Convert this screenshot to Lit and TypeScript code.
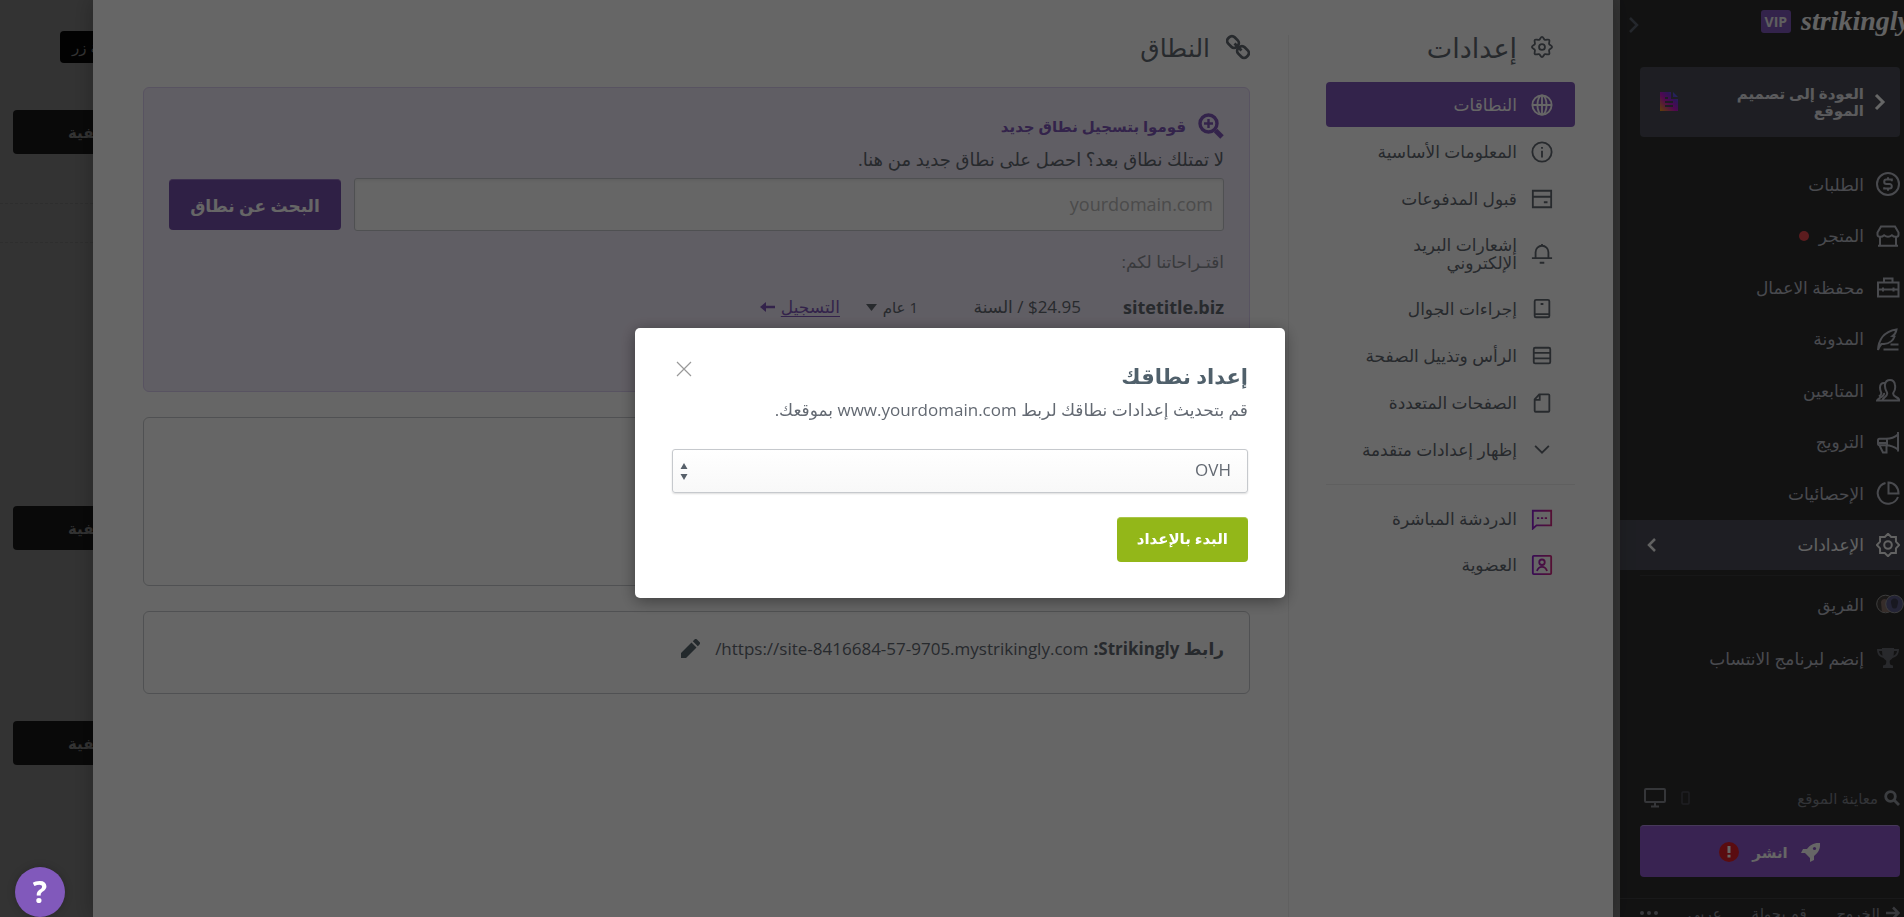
import { LitElement, html, svg, css, nothing } from "lit";
import { customElement, state } from "lit/decorators.js";

const icons: Record<string, unknown> = {
  dollar: svg`<circle cx="12" cy="12" r="11"/><path d="M15.8 9.2V7.6H10.4a2.2 2.2 0 0 0 0 4.4h3.2a2.2 2.2 0 0 1 0 4.4H8.2v-1.2M12 5.3v2.3M12 16.4v2.3"/>`,
  store: svg`<path d="M5 2.5h14l3.5 6v2.4c0 1.2-1.4 1.9-3.2 1.9-1.3 0-2.5-.8-3.4-1.6-1.1.9-2.300 1.600-3.900 1.600s-2.800-.7-3.900-1.600c-.9.8-2.100 1.600-3.400 1.600-1.800 0-3.200-.7-3.200-1.900V8.500zM4 12.500v9.300M20 12.500v9.300M2 21.800h20"/>`,
  briefcase: svg`<path d="M2 7.500h20.500v14H2zM8 7.500v-4h8.500v4M2 14.500h20.500M7 12.500v4M17.500 12.500v4"/>`,
  quill: svg`<path d="M2 23c.5-9 5-18.500 18.500-20.500-.5 3-1.500 5-4 6.500l2 .5c-1.500 4.500-5 7-10.500 7.500L5.500 17C4 18.500 3 20 2 23zM14.500 17.500h8M7.500 22.500h15"/>`,
  people: svg`<path d="M8 15c.5 2-1 3-3.500 4.500C2 21 1 21.500 1 22.500h22.500c0-1.500-1.500-2.500-3.500-3.500-2.500-1.300-3.500-2.500-2.500-4.500 1.500-2 2-4.500 1.500-7.500C18.500 3.500 17 2 14 2S9.500 3.500 9 6.500c-.5 3.500.5 5.500 2 8 .8 2-.5 3.500-2.500 5-1 .8-2 1.500-2 3M9 5C5.500 4.500 4 6.500 4 9.500c0 2 .3 3 1 4.500.8 1.500 0 3-2 4.500"/>`,
  megaphone: svg`<path d="M22 2v19.500M22 4.500c-4 3.500-8 4.300-12 4.300H3.500C2.500 8.800 2 9.500 2 10.500v3c0 1 .5 1.700 1.500 1.700H10c4 0 8 1.300 12 4.300M11 9v6.200M2 13h9M3.500 15.500 7 22.500h3.500v-7"/>`,
  pie: svg`<path d="M9.500 2A10.500 10.500 0 1 0 22 16M12.500 1.500v11h10c0-6-4-11-10-11z"/>`,
  gear: svg`<path d="M12 .8 15.200 3.900 19.900 3.900 20 8.700 23.200 12 20 15.300 19.900 20.100 15.200 20.100 12 23.200 8.800 20.100 4.100 20.100 4 15.300 .8 12 4 8.700 4.100 3.900 8.800 3.900z"/><circle cx="12" cy="12" r="3.800"/>`,
  cog: svg`<path d="M12 1c1.600 0 1.900 2.700 3.200 3.200 1.300.6 3.500-1.100 4.600 0s-.6 3.300 0 4.600C20.300 10.100 23 10.400 23 12s-2.700 1.900-3.200 3.200c-.6 1.300 1.100 3.500 0 4.600s-3.300-.6-4.600 0c-1.300.5-1.600 3.200-3.200 3.200s-1.900-2.700-3.200-3.200c-1.300-.6-3.500 1.100-4.600 0s.6-3.300 0-4.600C3.700 13.900 1 13.600 1 12s2.700-1.900 3.200-3.200c.6-1.300-1.100-3.500 0-4.600s3.300.6 4.600 0C10.100 3.700 10.400 1 12 1z"/><circle cx="12" cy="12" r="3.200"/>`,
  globe: svg`<circle cx="12" cy="12" r="10.500"/><ellipse cx="12" cy="12" rx="5" ry="10.500"/><path d="M12 1.500v21M1.500 12h21"/>`,
  info: svg`<circle cx="12" cy="12" r="10.500"/><path d="M12 10.500V18M12 6.500v2"/>`,
  card: svg`<path d="M2 3h20v18H2zM2 9.500h20M14 15.500h4"/>`,
  bell: svg`<path d="M5 16v-6a7 7 0 0 1 14 0v6M1 16.500h22M12 1v2M9.500 21.500h5"/>`,
  phone: svg`<rect x="4" y="2" width="16" height="19" rx="1.500"/><path d="M4 17.500h16M10.500 6.500h3"/>`,
  rows: svg`<rect x="3" y="3" width="18" height="17" rx="1.500"/><path d="M3 8.500h18M3 14.500h18"/>`,
  page: svg`<path d="M9 2.500h10a1 1 0 0 1 1 1v17a1 1 0 0 1-1 1H5a1 1 0 0 1-1-1V8zM9.500 2.500V8.500H4"/>`,
  down: svg`<path d="M4.500 7.500 12 15l7.500-7.500"/>`,
  chat: svg`<path d="M2 3h20v16H6l-4 3.500zM6.500 11h2.500M10.800 11h2.500M15 11h2.500" stroke="url(#hot)"/>`,
  member: svg`<g stroke="url(#hot)"><rect x="2" y="2" width="20" height="20" rx="1"/><circle cx="12" cy="9" r="3"/><path d="M6.500 18.500c1-3 3-4.500 5.500-4.500s4.500 1.500 5.500 4.500"/></g>`,
};

const hot = svg`<defs><linearGradient id="hot" x1="0" y1="0" x2="24" y2="0" gradientUnits="userSpaceOnUse"><stop offset="0" stop-color="#8a20d8"/><stop offset="1" stop-color="#d8287c"/></linearGradient></defs>`;

const icon = (name: string, size = 24) => html`<svg class="icon" width=${size} height=${size} viewBox="0 0 24 24" fill="none" stroke="currentColor" stroke-width="2" aria-hidden="true">${hot}${icons[name]}</svg>`;

const mainNav = [
  { icon: "dollar", label: "الطلبات" },
  { icon: "store", label: "المتجر", dot: true },
  { icon: "briefcase", label: "محفظة الاعمال" },
  { icon: "quill", label: "المدونة" },
  { icon: "people", label: "المتابعين" },
  { icon: "megaphone", label: "الترويج" },
  { icon: "pie", label: "الإحصائيات" },
  { icon: "gear", label: "الإعدادات", active: true },
];

const settingsNav = [
  { icon: "globe", label: "النطاقات", active: true },
  { icon: "info", label: "المعلومات الأساسية" },
  { icon: "card", label: "قبول المدفوعات" },
  { icon: "bell", label: "إشعارات البريد الإلكتروني", tall: true },
  { icon: "phone", label: "إجراءات الجوال" },
  { icon: "rows", label: "الرأس وتذييل الصفحة" },
  { icon: "page", label: "الصفحات المتعددة" },
  { icon: "down", label: "إظهار إعدادات متقدمة" },
];

const extraNav = [
  { icon: "chat", label: "الدردشة المباشرة" },
  { icon: "member", label: "العضوية" },
];

const base = css`
  * { box-sizing: border-box; margin: 0; }
  a { color: inherit; text-decoration: none; }
  button, input, select { font: inherit; color: inherit; border: 0; }
  svg { flex: none; display: block; }
`;

@customElement("side-bar")
export class SideBar extends LitElement {
  static styles = [base, css`
    :host { display: flex; flex-direction: column; flex: none; width: 300px; height: calc(100vh + 9px); background: #2e2e2f; color: #b6b9c3; font-size: 17px; }
    .brand { display: flex; align-items: center; height: 42px; padding: 0 10px 0 8px; gap: 10px; }
    .logo { font: italic bold 28px/36px "Liberation Serif", serif; color: #f4f4f4; direction: ltr; }
    .vip { background: #8159bb; color: #eee; font: bold 14px/23px "Open Sans", sans-serif; padding: 0 4px; border-radius: 3px; }
    .collapse { margin-right: auto; background: none; color: #5c6370; padding: 0; margin-top: 8px; }
    .back { display: flex; align-items: center; height: 70px; margin: 25px 20px 0; padding: 0 14px 0 20px; border-radius: 4px; background: #4b4d57; color: #e4e4e8; font-size: 15px; line-height: 17px; font-weight: 600; }
    .back span { width: 136px; margin: 0 9px 0 auto; }
    .nav { display: flex; flex-direction: column; justify-content: space-between; height: 411px; margin-top: 22px; }
    .row { display: flex; align-items: center; gap: 12px; height: 50px; padding: 0 20px 0 26px; }
    .row .dot { width: 10px; height: 10px; margin-right: -2px; border-radius: 50%; background: #e5484d; }
    .active { background: #4b4d57; color: #f4f4f4; }
    .active .end { margin-right: auto; }
    .rule { border-top: 1px solid #3a3a3c; margin: 5px 20px 3px; }
    .team { padding-right: 16px; }
    .plain { margin-top: 4px; }
    .bottom { margin-top: auto; }
    .preview { display: flex; align-items: center; gap: 6px; padding: 0 20px 0 24px; font-size: 15px; color: #7f828b; height: 34px; }
    .preview .devices { display: flex; align-items: center; gap: 15px; margin-right: auto; }
    .publish { display: flex; align-items: center; justify-content: center; gap: 13px; width: 260px; height: 52px; margin: 10px 20px 21px; padding: 0; border-radius: 4px; background: #8e58cd; border-top: 1px solid #b28fe0; color: #fff; font-size: 15px; font-weight: 700; }
    .footer { display: flex; justify-content: space-between; align-items: center; height: 28px; padding: 0 20px; border-top: 1px solid #3f3f42; color: #8d9099; font-size: 15px; }
    .footer a { display: flex; align-items: center; gap: 6px; }
  `];

  render() {
    return html`
      <div class="brand">
        <span class="logo">strikingly</span><span class="vip">VIP</span>
        <button class="collapse" aria-label="طي"><svg width="12" height="16" viewBox="0 0 12 16" fill="none" stroke="currentColor" stroke-width="2.500"><path d="m2 1 7 7-7 7"/></svg></button>
      </div>
      <a class="back" href="#">
        <svg width="13" height="18" viewBox="0 0 13 18" fill="none" stroke="#fff" stroke-width="3"><path d="m3 2 7 7-7 7"/></svg>
        <span>العودة إلى تصميم الموقع</span>
        <svg width="18" height="20" viewBox="0 0 18 20"><defs><linearGradient id="doc" x1="0" y1="1" x2="1" y2="0"><stop offset="0" stop-color="#f0a010"/><stop offset=".45" stop-color="#c814c8"/><stop offset=".7" stop-color="#7a30d8"/><stop offset="1" stop-color="#3888f0"/></linearGradient></defs><path fill="url(#doc)" d="M0 0h11v7h7v12H0zM13 0l5 5h-5z"/><path stroke="#4b4d57" stroke-width="2" d="M5 6h3M5 10h8M5 14h8"/></svg>
      </a>
      <nav class="nav">
        ${mainNav.map((n) => html`<a href="#" class="row ${n.active ? "active" : ""}">${icon(n.icon)}<span>${n.label}</span>${n.dot ? html`<i class="dot"></i>` : nothing}${n.active ? html`<svg class="end" width="12" height="14" viewBox="0 0 12 14" fill="none" stroke="currentColor" stroke-width="2.500"><path d="M9 1 3 7l6 6"/></svg>` : nothing}</a>`)}
      </nav>
      <div class="rule"></div>
      <a href="#" class="row team"><svg width="28" height="20" viewBox="0 0 28 20"><circle cx="9.500" cy="10" r="8.800" fill="#45403c" stroke="#999" stroke-width="1"/><path fill="#88706a" d="M5 8c1-4 6-4 7 0v5l3 5H6z"/><circle cx="18.500" cy="10" r="8.800" fill="#5a5a88" stroke="#999" stroke-width="1"/><path fill="#3c3c50" d="M15 9c-1-6 8-6 7 0l-1 4c-1 2-4 2-5 0z"/></svg><span>الفريق</span></a>
      <a href="#" class="row plain"><svg width="24" height="24" viewBox="0 0 24 24" fill="#65676e"><path d="M6 2h12v1h5c0 6-3 8-6.500 9-1 1.500-2.500 2-2.800 3 0 3 .3 4 3.300 4.500v2.500H7v-2.500c3-.5 3.300-1.500 3.300-4.500-.3-1-1.800-1.500-2.800-3C4 11 1 9 1 3h5zM3 5c.3 2.500 1.500 4 3.500 4.800L6 5zm18 0h-3l-.5 4.800C19.500 9 20.700 7.500 21 5z"/></svg><span>إنضم لبرنامج الانتساب</span></a>
      <div class="bottom">
        <div class="preview">
          <svg width="16" height="16" viewBox="0 0 16 16" fill="none" stroke="#9598a1" stroke-width="2.800"><circle cx="6.500" cy="6.500" r="4.800"/><path d="m10 10 5 5"/></svg>
          <span>معاينة الموقع</span>
          <span class="devices">
            <svg width="9" height="14" viewBox="0 0 9 14" fill="none" stroke="#4c4e55" stroke-width="1.500"><rect x="1" y="1" width="7" height="12" rx="1"/></svg>
            <svg width="22" height="20" viewBox="0 0 22 20" fill="none" stroke="#85878e" stroke-width="2"><rect x="1" y="1" width="20" height="13" rx="1"/><path d="M11 14v4M7 18.500h8"/></svg>
          </span>
        </div>
        <button class="publish">
          <svg width="20" height="20" viewBox="0 0 20 20" fill="#fff"><path d="M19 1c-6-.6-10 2-13 6H2L0 11h4l5 5v4l4-2v-4c4-3 6.500-7 6-13z"/><circle cx="13.500" cy="6.500" r="1.600" fill="#8e58cd"/></svg>
          <span>انشر</span>
          <svg width="20" height="20" viewBox="0 0 20 20"><circle cx="10" cy="10" r="10" fill="#e02028"/><path stroke="#fff" stroke-width="3" d="M10 4v7M10 12.800v2.700"/></svg>
        </button>
        <div class="footer">
          <a href="#"><svg width="14" height="14" viewBox="0 0 14 14" fill="none" stroke="currentColor" stroke-width="2.500"><path d="M0 7h12M7 1.500 12.500 7 7 12.500"/></svg>الخروج</a>
          <a href="#">قم بجولة</a><a href="#">عربي</a>
          <a href="#" aria-label="المزيد"><svg width="18" height="4" viewBox="0 0 18 4" fill="currentColor"><circle cx="2" cy="2" r="2"/><circle cx="9" cy="2" r="2"/><circle cx="16" cy="2" r="2"/></svg></a>
        </div>
      </div>`;
  }
}

@customElement("settings-menu")
export class SettingsMenu extends LitElement {
  static styles = [base, css`
    :host { display: block; flex: none; width: 325px; padding: 27px 38px 0; color: #636972; background: linear-gradient(#f0f0f0, #f0f0f0) left 35px / 1px 100% no-repeat; }
    h1 { display: flex; align-items: center; gap: 14px; height: 40px; padding-right: 22px; margin-bottom: 15px; font-size: 27px; font-weight: 500; }
    nav { display: flex; flex-direction: column; gap: 2px; font-size: 17px; line-height: 18px; }
    a { display: flex; align-items: center; gap: 14px; min-height: 45px; padding: 0 22px 0 0; border-radius: 4px; }
    a span { max-width: 190px; }
    .tall { min-height: 61px; }
    .tall span { width: 130px; }
    .active { background: #8159bb; color: #fff; }
    .extra { margin-top: 12px; padding-top: 11px; border-top: 1px solid #eee; gap: 1px; }
  `];

  render() {
    const item = (n: any) => html`<a href="#" class="${n.active ? "active" : ""} ${n.tall ? "tall" : ""}">${icon(n.icon, 22)}<span>${n.label}</span></a>`;
    return html`<h1>${icon("cog", 22)}<span>إعدادات</span></h1>
      <nav>${settingsNav.map(item)}</nav>
      <nav class="extra">${extraNav.map(item)}</nav>`;
  }
}

@customElement("domain-panel")
export class DomainPanel extends LitElement {
  static styles = [base, css`
    :host { display: flex; flex-direction: column; flex: 1; min-width: 0; padding: 27px 38px 0 50px; color: #636972; font-size: 18px; }
    h2 { display: flex; align-items: center; gap: 16px; height: 40px; margin-bottom: 20px; font-size: 25px; font-weight: 500; }
    .box { border: 1px solid #c9cbcf; border-radius: 6px; padding: 25px; }
    .find { background: #f1eaf9; border-color: #dccff2; height: 305px; margin-bottom: 25px; }
    .empty { height: 169px; margin-bottom: 25px; }
    .address { display: flex; align-items: center; gap: 5px; height: 83px; padding: 0 25px 8px; font-size: 17px; }
    .address b { font-weight: 700; }
    .address button { background: none; padding: 0; margin-right: 10px; }
    h3 { display: flex; align-items: center; gap: 12px; height: 26px; font-size: 15px; font-weight: 600; color: #8159bb; }
    .hint { line-height: 26px; margin: 7px 0 6px; }
    form { display: flex; gap: 13px; align-items: center; }
    input { flex: 1; min-width: 0; height: 53px; padding: 0 10px 2px; direction: ltr; text-align: right; border: 1px solid #c6c9cd; border-radius: 3px; background: #fff; box-shadow: inset 0 2px 3px #0001; }
    input::placeholder { color: #bbb; opacity: 1; }
    .search { width: 172px; height: 51px; padding: 0; border-radius: 4px; background: #7750ac; border-top: 1px solid #9c7bc8; color: #fff; font-size: 17px; font-weight: 600; }
    .hint2 { line-height: 26px; margin-top: 18px; color: #8c9097; font-size: 17px; }
    .offer { display: flex; align-items: center; height: 30px; margin-top: 17px; line-height: 26px; font-size: 17px; }
    .offer b { width: 143px; font-size: 18px; }
    .offer .price { width: 163px; }
    .offer .term { width: 78px; font-size: 15px; display: flex; align-items: center; gap: 6px; }
    .offer a { display: flex; align-items: center; gap: 6px; color: #8159bb; }
    .offer u { text-underline-offset: 3px; }
  `];

  render() {
    return html`
      <h2><svg width="24" height="26" viewBox="0 0 24 26" fill="none" stroke="currentColor" stroke-width="2.800"><rect x="-6" y="-4.500" width="12" height="9" rx="3.800" transform="translate(7 8) rotate(45)"/><rect x="-6" y="-4.500" width="12" height="9" rx="3.800" transform="translate(17 18) rotate(45)"/><path d="m8.500 9.500 7 7"/></svg><span>النطاق</span></h2>
      <section class="box find">
        <h3><svg width="26" height="26" viewBox="0 0 26 26" fill="none" stroke="currentColor"><circle cx="10.500" cy="10.500" r="8.500" stroke-width="3.400"/><path stroke-width="5" d="m17.500 17.500 6.500 6.500"/><path stroke-width="2.400" d="M10.500 6v9M6 10.500h9"/></svg><span>قوموا بتسجيل نطاق جديد</span></h3>
        <p class="hint"><label for="domain">لا تمتلك نطاق بعد؟ احصل على نطاق جديد من هنا.</label></p>
        <form @submit=${(e: Event) => e.preventDefault()}>
          <input id="domain" type="text" placeholder="yourdomain.com" />
          <button class="search">البحث عن نطاق</button>
        </form>
        <p class="hint2">اقتـراحاتنا لكم:</p>
        <div class="offer">
          <b>sitetitle.biz</b><span class="price">$24.95 / السنة</span>
          <span class="term"><span>1 عام</span><svg width="11" height="7" viewBox="0 0 11 7" fill="currentColor"><path d="M0 0h11L5.500 7z"/></svg></span>
          <a href="#"><u>التسجيل</u><svg width="15" height="10" viewBox="0 0 15 10" fill="none" stroke="currentColor" stroke-width="2.500"><path d="M15 5H3"/><path fill="currentColor" stroke="none" d="M6 0v10L0 5z"/></svg></a>
        </div>
      </section>
      <section class="box empty"></section>
      <section class="box address">
        <b>رابط Strikingly:</b>
        <span>https://site-8416684-57-9705.mystrikingly.com/</span>
        <button aria-label="تعديل"><svg width="19" height="19" viewBox="0 0 19 19" fill="#57666e"><path d="M0 19v-5L10.500 3.500l5 5L5 19zM11.800 2.200 13.500.5a1.800 1.800 0 0 1 2.500 0l2.500 2.500a1.800 1.800 0 0 1 0 2.500l-1.700 1.700z"/></svg></button>
      </section>`;
  }
}

@customElement("app-root")
export class AppRoot extends LitElement {
  @state() private open = true;

  static styles = [base, css`
    :host { display: block; height: 100vh; overflow: hidden; background: #808080; font-family: "Open Sans", "Noto Sans", "DejaVu Sans", sans-serif; }
    .app { display: flex; direction: rtl; width: calc(100% + 16px); height: 100vh; }
    .panel { display: flex; flex: 1; min-width: 0; margin-right: 7px; background: #fff; box-shadow: 0 0 20px #0004; z-index: 1; }
    .canvas { flex: none; width: 93px; direction: ltr; overflow: hidden; padding: 31px 0 0 13px; color: #808080; font-size: 15px; font-weight: 600; }
    .canvas button { display: block; width: 150px; height: 44px; padding: 0 0 0 55px; margin-bottom: 171px; border-radius: 4px; background: #181818; text-align: left; white-space: nowrap; }
    .canvas .small { height: 32px; margin: 0 0 47px 47px; padding-left: 12px; background: #060606; font-weight: 400; }
    .canvas .guides { height: 40px; margin: -122px 0 263px -13px; border: 1px dashed #747474; border-width: 1px 0; }
    .overlay { position: fixed; top: 0; left: 0; width: calc(100% + 16px); height: calc(100% + 9px); display: grid; place-items: center; background: #0009; z-index: 2; }
    .modal { width: 650px; padding: 33px 37px 36px; direction: rtl; border-radius: 5px; background: #fff; box-shadow: 0 3px 16px #0006; color: #636972; font-size: 17px; }
    .head { display: flex; justify-content: space-between; align-items: flex-start; }
    h2 { font-size: 21px; line-height: 30px; font-weight: 600; color: #50606b; }
    .close { background: none; padding: 0; width: 24px; height: 16px; display: grid; place-items: center; }
    .modal p { line-height: 28px; margin: 5px 0 25px; }
    .pick { display: block; position: relative; }
    select { display: block; width: 100%; height: 44px; padding: 0 16px 4px; appearance: none; border: 1px solid #c6c9cd; border-radius: 3px; background: linear-gradient(#fff, #f8f8f8); box-shadow: 0 1px 2px #0002; }
    .pick svg { position: absolute; left: 8px; bottom: 13px; }
    .start { display: block; height: 45px; margin: 24px 0 0; padding: 0 20px 4px; border-radius: 4px; background: #93b719; border-top: 1px solid #a9c64a; color: #fff; font-size: 15px; font-weight: 700; }
    .help { position: fixed; left: 15px; bottom: 0; width: 50px; height: 50px; padding: 0; border-radius: 50%; background: #8159bb; color: #fff; font: bold 30px/50px "Open Sans", sans-serif; z-index: 3; box-shadow: 0 0 8px #0003; }
  `];

  render() {
    return html`
      <div class="app">
        <side-bar></side-bar>
        <main class="panel"><settings-menu></settings-menu><domain-panel></domain-panel></main>
        <aside class="canvas">
          <button class="small" dir="rtl">إضافة زر</button>
          <button>الخلفية</button>
          <div class="guides"></div>
          <button>الخلفية</button>
          <button>الخلفية</button>
        </aside>
      </div>
      ${this.open ? html`<div class="overlay"><div class="modal" role="dialog" aria-labelledby="setup">
        <div class="head"><h2 id="setup">إعداد نطاقك</h2>
          <button class="close" aria-label="إغلاق" @click=${() => (this.open = false)}><svg width="16" height="16" viewBox="0 0 16 16" stroke="#999" stroke-width="1.200"><path d="m1 1 14 14M15 1 1 15"/></svg></button></div>
        <p><label for="host">قم بتحديث إعدادات نطاقك لربط www.yourdomain.com بموقعك.</label></p>
        <span class="pick"><select id="host"><option>OVH</option></select>
          <svg width="8" height="17" viewBox="0 0 8 17" fill="#57606a"><path d="M4 0l3.500 6h-7zM4 17l3.500-6h-7z"/></svg></span>
        <button class="start">البدء بالإعداد</button>
      </div></div>` : nothing}
      <button class="help" aria-label="مساعدة">?</button>`;
  }
}
